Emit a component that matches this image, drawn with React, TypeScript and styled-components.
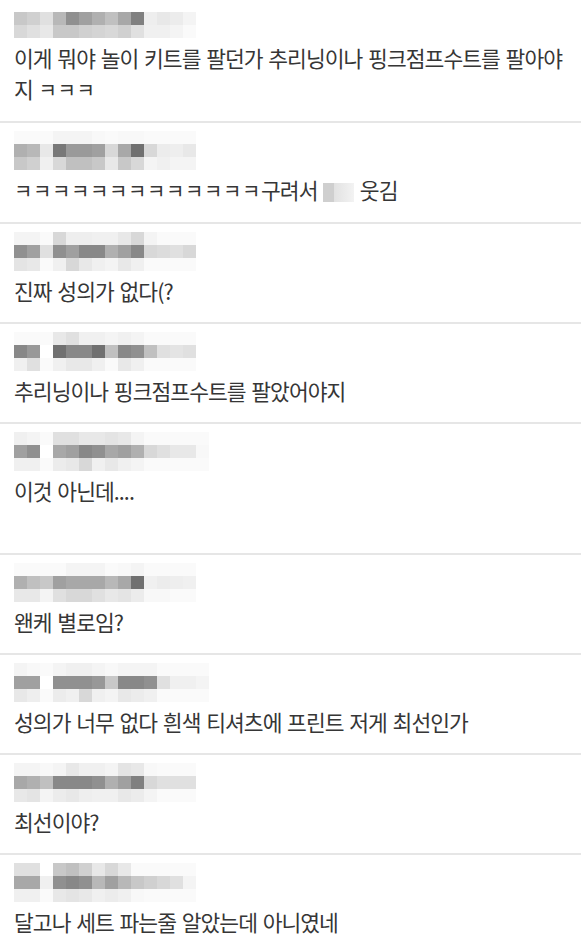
import React from "react";
import styled, { createGlobalStyle } from "styled-components";

type Comment = {
  // rows of blurred nickname cells, each value a grey level in hex
  nick: string[];
  text: React.ReactNode;
  lines?: number;
};

const CELL = 13;

const GlobalStyle = createGlobalStyle`
  html, body {
    margin: 0;
    padding: 0;
    background: #ffffff;
  }
  body {
    font-family: "Noto Sans CJK KR", "Noto Sans", sans-serif;
    -webkit-font-smoothing: antialiased;
  }
`;

const List = styled.ul`
  list-style: none;
  margin: 0;
  padding: 0;
  width: 581px;
  background: #ffffff;
`;

const Row = styled.li`
  display: flex;
  flex-direction: column;
  gap: 4px;
  padding: 8px 15px 16px 14px;
  border-bottom: 2px solid #e6e6e6;

  &:first-child {
    padding-top: 12px;
  }
`;

const Body = styled.p<{ $lines: number }>`
  margin: 0;
  font-size: 21.5px;
  line-height: 31px;
  letter-spacing: -0.95px;
  word-spacing: 1.8px;
  color: #363636;
  min-height: ${({ $lines }) => $lines * 31}px;
`;

// ㅋ runs sit smaller than the syllables around them
const Laugh = styled.span`
  font-size: 20px;
  letter-spacing: 0.6px;
  word-spacing: 0;
`;

const Censored = styled.span`
  display: inline-block;
  width: 31px;
  height: 19px;
  vertical-align: -3px;
  background: linear-gradient(
    90deg,
    #cfcfcf 0%,
    #cfcfcf 35%,
    #e2e2e2 36%,
    #ececec 75%,
    #f3f3f3 100%
  );
`;

const NickArt = styled.svg`
  display: block;
  filter: blur(0.5px);
`;

function Nick({ rows }: { rows: string[] }) {
  const cells = rows.map((r) => r.split(" "));
  const cols = Math.max(...cells.map((c) => c.length));
  return (
    <NickArt width={cols * CELL} height={rows.length * CELL}>
      {cells.map((row, y) =>
        row.map((v, x) => (
          <rect
            key={`${x}-${y}`}
            x={x * CELL}
            y={y * CELL}
            width={CELL}
            height={CELL}
            fill={`#${v}${v}${v}`}
          />
        ))
      )}
    </NickArt>
  );
}

const comments: Comment[] = [
  {
    nick: [
      "c8 d0 e0 b8 90 a0 b0 c0 a8 80 ee e8 ec f4",
      "d8 e0 e8 c8 c8 d0 d4 d8 d0 e0 f0 f0 f4 fa",
    ],
    text: (
      <>
        이게 뭐야 놀이 키트를 팔던가 추리닝이나 핑크점프수트를 팔아야지{" "}
        <Laugh>ㅋㅋㅋ</Laugh>
      </>
    ),
  },
  {
    nick: [
      "fa fa fa f4 f4 f4 f8 fa f8 f8 fa fa fa fa",
      "b0 b8 e8 78 9a 9a a0 d8 a8 70 d8 ec ee e8",
      "c8 d0 f0 d8 c0 c0 c8 e8 c8 d8 f4 f0 f4 f4",
    ],
    text: (
      <>
        <Laugh>ㅋㅋㅋㅋㅋㅋㅋㅋㅋㅋㅋㅋㅋ</Laugh>구려서 <Censored /> 웃김
      </>
    ),
  },
  {
    nick: [
      "f4 f4 fa d8 ee ee f0 f0 e8 d8 f4 fa fa fa",
      "90 a0 e0 90 a0 88 88 b0 a0 88 d8 dc e0 d8",
      "e4 e8 fa f0 d8 e8 f0 f4 e8 f0 fa fa fa fa",
    ],
    text: "진짜 성의가 없다(?",
  },
  {
    nick: [
      "fa fa fa e8 e0 f0 f0 f4 f0 f4 fa fa fa fa",
      "88 99 ff 70 88 88 70 c0 88 90 c0 e0 e4 e0",
      "f0 e0 fa f0 e8 e8 f0 fa e8 f0 fa fa fa fa",
    ],
    text: "추리닝이나 핑크점프수트를 팔았어야지",
  },
  {
    nick: [
      "f0 f4 fa e0 e0 e8 e8 e4 e8 f4 fa fa fa fa fa",
      "a0 90 ff a8 a0 88 90 a8 a0 b0 d8 e0 e8 e8 f8",
      "f0 f0 fa ec e8 d8 f0 e8 f0 f4 fa fa fa fa fa",
    ],
    text: "이것 아닌데....",
    lines: 2,
  },
  {
    nick: [
      "fa fa fa fa f4 f4 f4 fa f8 f4 fa fa fa fa",
      "b0 c0 c8 a0 a8 a8 a8 b8 a8 70 f0 ec ee f0",
      "e8 e8 f4 e0 d8 d8 e0 e8 e4 ec f8 f8 fa fa",
    ],
    text: "왠케 별로임?",
  },
  {
    nick: [
      "f4 f8 fa f4 f0 f0 f4 f8 f4 f4 f4 fa fa fa fa",
      "a0 a0 ff 90 90 90 98 c8 88 88 90 e0 f0 f0 f4",
      "e8 ee fa ec f0 d8 f0 f4 e8 ec f0 fa fa fa fa",
    ],
    text: "성의가 너무 없다 흰색 티셔츠에 프린트 저게 최선인가",
  },
  {
    nick: [
      "f4 f4 f8 f4 e8 f0 f0 f4 e4 e8 f8 fa fa fa",
      "a8 b0 c0 88 88 88 90 b0 a0 80 d8 e0 e0 e0",
      "e8 e4 f4 ec e8 ee f0 f0 e8 ec f4 fa fa fa",
    ],
    text: "최선이야?",
  },
  {
    nick: [
      "e0 e0 ff c8 c0 d0 e8 d8 e8 fa fa fa fa fa",
      "a8 a8 f0 90 88 90 b8 a0 b8 c8 d0 d8 e0 f4",
      "f0 f0 fa e8 e4 e8 f0 ec f0 f8 fa fa fa fa",
    ],
    text: "달고나 세트 파는줄 알았는데 아니였네",
  },
];

export default function App() {
  return (
    <>
      <GlobalStyle />
      <List>
        {comments.map((c, i) => (
          <Row key={i}>
            <Nick rows={c.nick} />
            <Body $lines={c.lines ?? 1}>{c.text}</Body>
          </Row>
        ))}
      </List>
    </>
  );
}
